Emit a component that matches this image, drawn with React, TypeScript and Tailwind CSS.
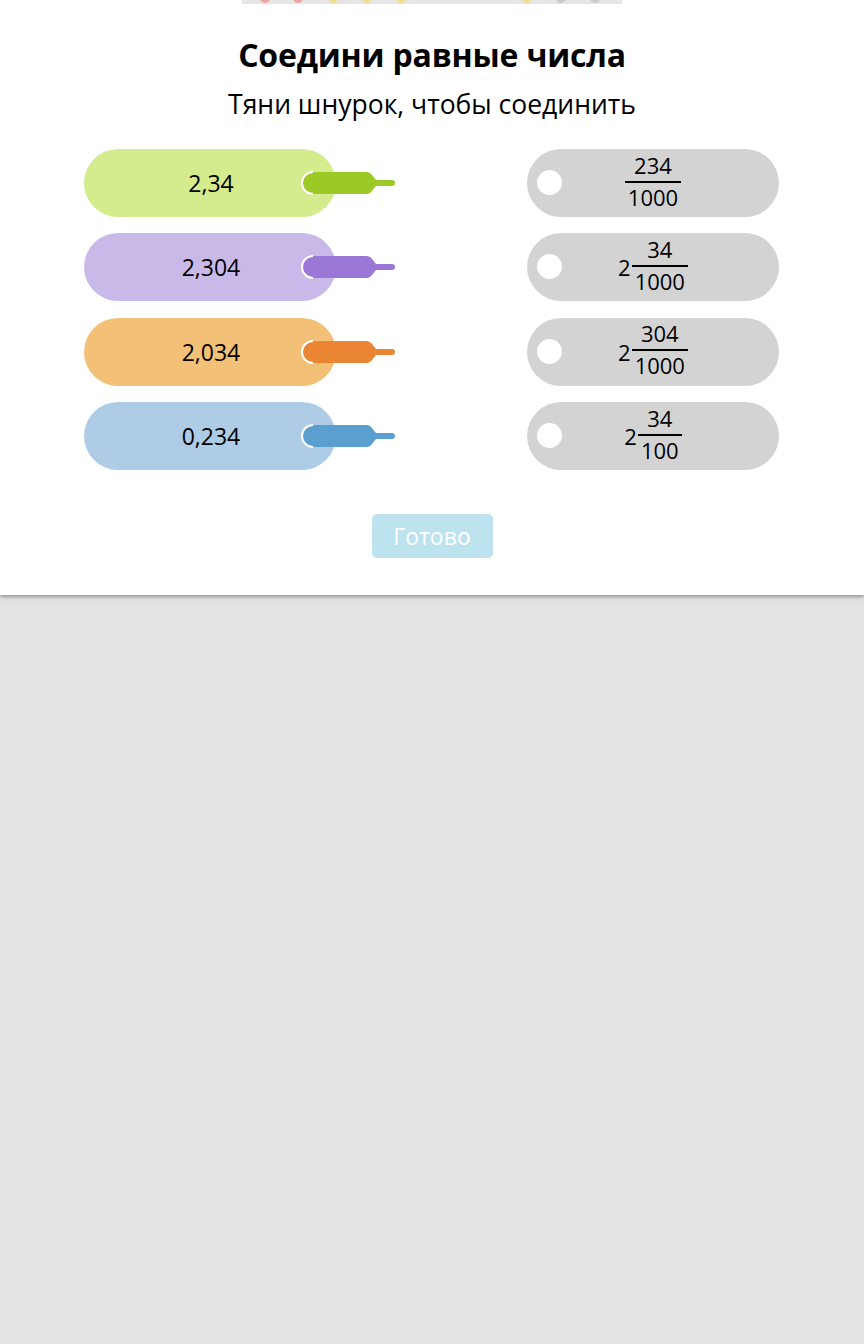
import React from "react";

const left = [
  { label: "2,34", bg: "bg-[#d4eb8e]", tip: "#9dc926" },
  { label: "2,304", bg: "bg-[#c9b9e8]", tip: "#9b78d5" },
  { label: "2,034", bg: "bg-[#f3c077]", tip: "#ea8533" },
  { label: "0,234", bg: "bg-[#aecce6]", tip: "#5a9fd0" },
];

const right: { whole?: string; num: string; den: string }[] = [
  { num: "234", den: "1000" },
  { whole: "2", num: "34", den: "1000" },
  { whole: "2", num: "304", den: "1000" },
  { whole: "2", num: "34", den: "100" },
];

function Tip({ color }: { color: string }) {
  return (
    <svg width="96" height="26" viewBox="0 0 96 26" className="absolute left-[216px] top-[21px]">
      <path
        d="M13 2 H66 Q70 2 72 5 L76 10 H92 Q95 10 95 13 Q95 16 92 16 H76 L72 21 Q70 24 66 24 H13 A11 11 0 0 1 13 2 Z"
        fill={color}
      />
      <path d="M13 2 A11 11 0 0 0 13 24" fill="none" stroke="#ffffff" strokeWidth="2" />
    </svg>
  );
}

const dots = [
  { x: 23, c: "#f3a0a0" },
  { x: 56, c: "#f3a0a0" },
  { x: 91, c: "#f4dc88" },
  { x: 125, c: "#f4dc88" },
  { x: 159, c: "#f4dc88" },
  { x: 285, c: "#f4dc88" },
  { x: 319, c: "#c9c9c9" },
  { x: 353, c: "#c9c9c9" },
];

export default function App() {
  return (
    <div className="min-h-[1344px] bg-[#e2e4e4]" style={{ fontFamily: "'Open Sans', 'Noto Sans', sans-serif" }}>
      <div className="bg-white h-[595px] shadow-[0_2px_4px_rgba(0,0,0,0.35)] flex flex-col items-center">
        <div className="relative w-[380px] h-[4px] bg-[#e6e6e6] overflow-hidden">
          {dots.map((d, i) => (
            <div
              key={i}
              className="absolute top-[-7px] w-[10px] h-[10px] rounded-full"
              style={{ left: d.x - 5, backgroundColor: d.c }}
            />
          ))}
        </div>
        <h1 className="mt-[30px] text-[32px] leading-[42px] font-bold text-black tracking-[-0.2px]">
          Соедини равные числа
        </h1>
        <p className="mt-[11px] text-[26.5px] leading-[34px] text-black">Тяни шнурок, чтобы соединить</p>
        <div className="mt-[28px] w-[864px] flex justify-between px-[84px] pr-[85px]">
          <div className="flex flex-col gap-[16.4px]">
            {left.map((l, i) => (
              <div key={i} className={`relative w-[252px] h-[68px] rounded-full ${l.bg} flex items-center justify-center`}>
                <span className="text-[23px] text-black pl-[2px]">{l.label}</span>
                <Tip color={l.tip} />
              </div>
            ))}
          </div>
          <div className="flex flex-col gap-[16.4px]">
            {right.map((r, i) => (
              <div key={i} className="relative w-[252px] h-[68px] rounded-full bg-[#d3d3d3] flex items-center justify-center">
                <div className="absolute left-[10px] top-[21px] w-[25px] h-[25px] rounded-full bg-white" />
                <div className="flex items-center text-black text-[22px] leading-none">
                  {r.whole && <span className="mr-[1px]">{r.whole}</span>}
                  <div className="flex flex-col items-center">
                    <span className="px-[4px] leading-[26px] -mt-[3px] pb-[3px]">{r.num}</span>
                    <span className="block h-[2px] w-full bg-black" />
                    <span className="px-[3px] leading-[29px]">{r.den}</span>
                  </div>
                </div>
              </div>
            ))}
          </div>
        </div>
        <button className="mt-[44px] w-[121px] h-[44px] rounded-[5px] bg-[#bde3ef] text-white text-[23px]">
          Готово
        </button>
      </div>
    </div>
  );
}
